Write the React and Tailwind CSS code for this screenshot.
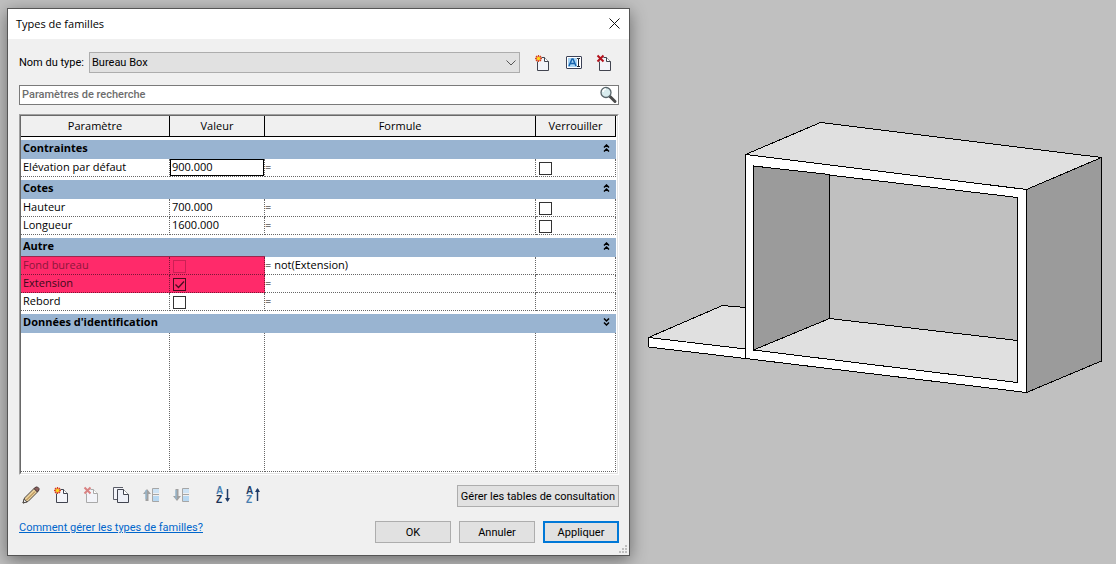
import { useState } from "react";
import { clsx } from "clsx";

const Spark = () => (
  <g>
    <path d="M5.500 1v7M2 4.500h7M3 2l5 5M8 2L3 7" stroke="#d8401c" strokeWidth="1.300" />
    <circle cx="5.500" cy="4.500" r="1.700" fill="#ffd91c" />
  </g>
);

const Icon = ({ children, size = 18 }) => (
  <svg width={size} height={size} viewBox="0 0 18 18" fill="none" className="overflow-visible" aria-hidden="true">
    {children}
  </svg>
);

const Page = ({ stroke = "#41444f" }) => (
  <g>
    <path d="M4.500 3.500h7l4 4v9h-11z" fill="#f3f4f9" />
    <path d="M4.500 7.500v9h11v-9l-4-4H8.500" stroke={stroke} strokeLinejoin="round" />
    <path d="M11.500 3.500v4h4" fill="#fff" stroke={stroke} />
  </g>
);

const NewIcon = () => (
  <Icon>
    <Page />
    <Spark />
  </Icon>
);

const DeleteIcon = ({ muted }) => (
  <Icon>
    <Page stroke={muted ? "#a9a9a9" : "#41444f"} />
    <path d="M2.500 1.500l6 6M8.500 1.500l-6 6" stroke={muted ? "#d98282" : "#b3121d"} strokeWidth="2" />
  </Icon>
);

const RenameIcon = () => (
  <Icon>
    <rect x="1.500" y="2.500" width="15" height="12" rx="0.500" fill="#fff" stroke="#3c4257" />
    <rect x="3" y="4" width="9" height="9" fill="#a9d5f5" />
    <path d="M4 12l3-7h1l3 7M5.500 9.500h4" stroke="#1663ad" strokeWidth="1.500" />
    <path d="M12 4.500h1.500M15 4.500h-1.500v8M12 12.500h3" stroke="#20242f" />
  </Icon>
);

const PencilIcon = () => (
  <Icon>
    <path d="M1 17l1.500-5L12 2.500l3.500 3.500L6 15.500z" fill="#e9cf9a" stroke="#4a4540" />
    <path d="M12 2.500L14 1h1.500L17 2.500V4l-1.500 2z" fill="#8b5f5c" stroke="#4c3a3a" />
    <path d="M4.500 14L13 5.500" stroke="#a3773a" />
    <path d="M1 17l1.200-4L5 15.800z" fill="#f5f5f5" stroke="#4a4540" />
  </Icon>
);

const CopyIcon = () => (
  <Icon>
    <path d="M11 1.500H1.500v12H5" fill="#f3f4f9" stroke="#5a5d68" />
    <path d="M5.500 3.500h6l5 5v8h-11z" fill="#eef0f7" stroke="#41444f" strokeLinejoin="round" />
    <path d="M11.500 3.500v5h5" fill="#fff" stroke="#41444f" />
  </Icon>
);

const MoveIcon = ({ down }) => (
  <Icon>
    <path
      d={down ? "M3.500 3h3v7H9l-4 5-4-5h2.500z" : "M3.500 15V8H1l4-5 4 5H6.500v7z"}
      fill="#a0a0a0"
    />
    <path d="M4 4v9" stroke="#8fbfe0" />
    <rect x="11" y="3" width="6" height="4" fill="#cde3f5" />
    <rect x="11" y="10" width="6" height="5" fill="#b7d8f2" />
    <path d="M17 2.500h-6.500v13H17M10.500 8.500H17" stroke="#a6a6a6" />
  </Icon>
);

const SortIcon = ({ up }) => (
  <Icon>
    <g fontFamily="Liberation Sans, sans-serif" fontSize="10" fontWeight="700">
      <text x="2" y="8" fill={up ? "#243f68" : "#4a7fb0"}>A</text>
      <text x="2" y="17" fill={up ? "#4a7fb0" : "#1c3458"}>Z</text>
    </g>
    <path d="M13.500 3v12" stroke="#1f3b66" strokeWidth="1.500" />
    <path d={up ? "M11 6l2.500-4L16 6z" : "M11 12l2.500 4 2.500-4z"} fill="#1f3b66" />
  </Icon>
);

const SearchIcon = () => (
  <Icon>
    <path d="M11 10.500l5 5" stroke="#4a4a4a" strokeWidth="3" strokeLinecap="round" />
    <circle cx="7" cy="6.500" r="5" fill="#d8ecee" stroke="#59666b" strokeWidth="1.300" />
    <path d="M4 6a3 3 0 0 1 3-3" stroke="#fff" strokeWidth="1.500" />
  </Icon>
);

const Chevrons = ({ down }) => (
  <svg width="7" height="8" viewBox="0 0 7 8" fill="none" stroke="#000" strokeWidth="1.500" aria-hidden="true">
    <path d={down ? "M1 .5l2.500 2.500L6 .5M1 4.500L3.500 7 6 4.500" : "M1 3.500L3.500 1 6 3.500M1 7.500L3.500 5 6 7.500"} />
  </svg>
);

const IconButton = ({ label, className, children, ...props }) => (
  <button
    type="button"
    aria-label={label}
    className={clsx("flex h-5 w-[30px] items-center justify-center", className)}
    {...props}
  >
    {children}
  </button>
);

const DialogButton = ({ primary, className, children }) => (
  <button
    type="button"
    className={clsx(
      "h-[22px] whitespace-nowrap bg-[#e1e1e1] pt-px text-center leading-4",
      primary ? "border-2 border-[#0078d7]" : "border border-[#adadad]",
      className
    )}
  >
    {children}
  </button>
);

const CheckBox = ({ label, checked, muted, tinted, onChange }) => (
  <span className="relative flex h-[13px] w-[13px]">
    <input
      type="checkbox"
      aria-label={label}
      checked={checked}
      disabled={muted}
      onChange={onChange}
      className={clsx(
        "h-[13px] w-[13px] appearance-none border",
        muted ? "border-[#cc2055]" : tinted ? "border-[#4a0c1f]" : "border-[#333] bg-white"
      )}
    />
    {checked && (
      <svg className="pointer-events-none absolute inset-0" width="13" height="13" fill="none" stroke="#4a0c1f" strokeWidth="1.300" aria-hidden="true">
        <path d="M2.500 6.500l3 3 5.500-6" />
      </svg>
    )}
  </span>
);

const GROUPS = [
  {
    title: "Contraintes",
    rows: [{ name: "Elévation par défaut", value: "900.000", active: true, lock: true }],
  },
  {
    title: "Cotes",
    rows: [
      { name: "Hauteur", value: "700.000", lock: true },
      { name: "Longueur", value: "1600.000", lock: true },
    ],
  },
  {
    title: "Autre",
    rows: [
      { name: "Fond bureau", tinted: true, muted: true, formula: "not(Extension)" },
      { name: "Extension", tinted: true },
      { name: "Rebord" },
    ],
  },
  { title: "Données d'identification", collapsed: true, rows: [] },
];

const CELL = "h-[18px] border-b border-r border-dotted p-0 align-top";

const ParameterRow = ({ row, checked, onToggle, locked, onLock }) => {
  const tint = row.tinted ? "border-[#7a1736] bg-[#ff2a6a]" : "border-[#666]";
  const edge = row.muted && "shadow-[0_-1px_0_#99284e]";
  return (
    <tr>
      <td className={clsx(CELL, tint, edge, "pl-0.5", row.muted ? "text-[#8c173a]" : row.tinted && "text-[#3d0a1a]")}>
        {row.name}
      </td>
      <td className={clsx(CELL, tint, edge)}>
        {row.value ? (
          <input
            type="text"
            aria-label={row.name}
            defaultValue={row.value}
            className={clsx(
              "block w-full bg-white outline-none",
              row.active ? "h-[17px] border border-black px-px pb-0.5" : "h-[15px] px-0.5"
            )}
          />
        ) : (
          <div className="pl-[3px] pt-[3px]">
            <CheckBox label={row.name} checked={checked} muted={row.muted} tinted={row.tinted} onChange={onToggle} />
          </div>
        )}
      </td>
      <td className={clsx(CELL, "whitespace-pre border-[#666]")}>= {row.formula}</td>
      <td className={clsx(CELL, "border-[#666]")}>
        {row.lock && (
          <div className="pl-[3px] pt-[3px]">
            <CheckBox label={`Verrouiller ${row.name}`} checked={locked} onChange={onLock} />
          </div>
        )}
      </td>
    </tr>
  );
};

const ParameterTable = () => {
  const [checks, setChecks] = useState({ Extension: true });
  const [locks, setLocks] = useState({});
  const toggle = (setter, name) => setter((prev) => ({ ...prev, [name]: !prev[name] }));

  return (
    <div className="mt-[9px] border border-b-white border-l-[#a0a0a0] border-r-white border-t-[#a0a0a0]">
      <div className="border border-b-[#e3e3e3] border-l-[#696969] border-r-[#e3e3e3] border-t-[#696969] bg-white pb-px pr-px">
        <table className="w-full table-fixed border-separate border-spacing-0 font-['Open_Sans','Noto_Sans',sans-serif] text-[11px] leading-4 text-black">
          <colgroup>
            <col className="w-[149px]" />
            <col className="w-[95px]" />
            <col />
            <col className="w-20" />
          </colgroup>
          <thead>
            <tr>
              {["Paramètre", "Valeur", "Formule", "Verrouiller"].map((title) => (
                <th key={title} className="h-[21px] border-b border-r border-black bg-[#f0f0f0] p-0 font-normal">
                  {title}
                </th>
              ))}
            </tr>
          </thead>
          {GROUPS.map((group) => (
            <tbody key={group.title}>
              <tr>
                <th colSpan={4} className="p-0 pt-[3px] text-left font-bold">
                  <div className="flex h-[19px] items-start justify-between bg-[#99b4d1] pl-0.5 pr-1.5">
                    <span>{group.title}</span>
                    <button type="button" aria-label={group.title} className="pt-1">
                      <Chevrons down={group.collapsed} />
                    </button>
                  </div>
                </th>
              </tr>
              {group.rows.map((row) => (
                <ParameterRow
                  key={row.name}
                  row={row}
                  checked={!!checks[row.name]}
                  onToggle={() => toggle(setChecks, row.name)}
                  locked={!!locks[row.name]}
                  onLock={() => toggle(setLocks, row.name)}
                />
              ))}
            </tbody>
          ))}
          <tbody>
            <tr>
              {[0, 1, 2, 3].map((i) => (
                <td key={i} className="h-[139px] border-b border-r border-dotted border-[#666] p-0" />
              ))}
            </tr>
          </tbody>
        </table>
      </div>
    </div>
  );
};

const FamilyTypesDialog = () => (
  <section
    role="dialog"
    aria-labelledby="dialog-title"
    className="flex flex-col border border-[#555] bg-[#f0f0f0] shadow-[0_4px_16px_rgba(0,0,0,0.45)]"
  >
    <header className="flex h-[30px] items-center justify-between bg-white pl-2 pr-[9px]">
      <h1 id="dialog-title" className="font-['Open_Sans','Noto_Sans',sans-serif] text-[11px] leading-4">
        Types de familles
      </h1>
      <button type="button" aria-label="Fermer">
        <svg width="11" height="11" className="mb-0.5" fill="none" stroke="#111" aria-hidden="true">
          <path d="M.5.5l10 10M10.500.5l-10 10" />
        </svg>
      </button>
    </header>

    <div className="relative flex flex-col pb-3 pl-[11px] pr-2.5 pt-[13px]">
      <div className="flex items-center">
        <label htmlFor="type-name" className="w-[70px] whitespace-nowrap">Nom du type:</label>
        <div className="relative flex-1">
          <select
            id="type-name"
            className="block h-[21px] w-full appearance-none border border-[#adadad] bg-[#e1e1e1] pl-0.5 leading-4"
          >
            <option>Bureau Box</option>
          </select>
          <svg className="pointer-events-none absolute right-1 top-2" width="10" height="6" fill="none" stroke="#555" aria-hidden="true">
            <path d="M.5.5L5 5 9.500.5" />
          </svg>
        </div>
        <div className="flex pl-[7px]">
          <IconButton label="Nouveau type"><NewIcon /></IconButton>
          <IconButton label="Renommer le type" className="ml-0.5"><RenameIcon /></IconButton>
          <IconButton label="Supprimer le type"><DeleteIcon /></IconButton>
        </div>
      </div>

      <div className="mt-3 flex h-5 items-center border border-[#7a7a7a] bg-white pr-px">
        <input
          type="search"
          aria-label="Paramètres de recherche"
          placeholder="Paramètres de recherche"
          className="min-w-0 flex-1 pl-0.5 font-medium leading-4 outline-none placeholder:text-[#6d6d6d]"
        />
        <button type="button" aria-label="Rechercher"><SearchIcon /></button>
      </div>

      <ParameterTable />

      <div className="mt-2.5 flex items-start justify-between">
        <div className="flex">
          <IconButton label="Modifier le paramètre" className="-ml-[3px]"><PencilIcon /></IconButton>
          <IconButton label="Nouveau paramètre"><NewIcon /></IconButton>
          <IconButton label="Supprimer le paramètre" disabled><DeleteIcon muted /></IconButton>
          <IconButton label="Copier le paramètre"><CopyIcon /></IconButton>
          <IconButton label="Monter" disabled><MoveIcon /></IconButton>
          <IconButton label="Descendre" disabled><MoveIcon down /></IconButton>
          <IconButton label="Tri croissant" className="ml-3"><SortIcon /></IconButton>
          <IconButton label="Tri décroissant"><SortIcon up /></IconButton>
        </div>
        <DialogButton className="w-[162px]">Gérer les tables de consultation</DialogButton>
      </div>

      <div className="mt-3.5 flex items-start justify-between">
        <a href="#aide" className="leading-3.5 text-[#0066cc] underline">Comment gérer les types de familles?</a>
        <div className="flex gap-2">
          <DialogButton className="w-[76px]">OK</DialogButton>
          <DialogButton className="w-[76px]">Annuler</DialogButton>
          <DialogButton primary className="w-[76px]">Appliquer</DialogButton>
        </div>
      </div>

      <svg className="absolute bottom-0.5 right-0.5" width="8" height="8" fill="#bfbfbf" aria-hidden="true">
        <path d="M6 0h2v2H6zM3 3h2v2H3zM6 3h2v2H6zM0 6h2v2H0zM3 6h2v2H3zM6 6h2v2H6z" />
      </svg>
    </div>
  </section>
);

const ModelView = () => (
  <svg
    viewBox="630 8 486 547"
    className="block w-full"
    stroke="#000"
    strokeLinejoin="round"
    shapeRendering="crispEdges"
    role="img"
    aria-label="Bureau Box"
  >
    {/* extension shelf */}
    <path d="M648.500 337.500L722.500 305.500 745.500 307.500V349z" fill="#e0e0e0" />
    <path d="M648.500 337.500L745.500 349V358.500L648.500 347z" fill="#fff" />
    {/* box */}
    <path d="M745.500 154.500L820.500 122.500 1101.500 157.500 1026.500 189.500z" fill="#e0e0e0" />
    <path d="M1026.500 189.500L1101.500 157.500V361L1026.500 392.500z" fill="#9b9b9b" />
    <path
      d="M745.500 154.500L1026.500 189.500V392.500L745.500 358.500zM753.500 166V350L1017.500 382.500V197.500z"
      fill="#fff"
      fillRule="evenodd"
    />
    <path d="M753.500 166L829.500 174.500V318.500L753.500 350z" fill="#9b9b9b" />
    <path d="M753.500 350L829.500 318.500 1017.500 340.500V382.500z" fill="#e0e0e0" />
  </svg>
);

const App = () => (
  <main className="grid min-h-screen grid-cols-[623fr_486fr] items-start bg-[#c0c0c0] pb-[9px] pl-[7px] pt-2 font-[Roboto,'Open_Sans',sans-serif] text-[11px] leading-4 text-black">
    <FamilyTypesDialog />
    <ModelView />
  </main>
);

export default App;
